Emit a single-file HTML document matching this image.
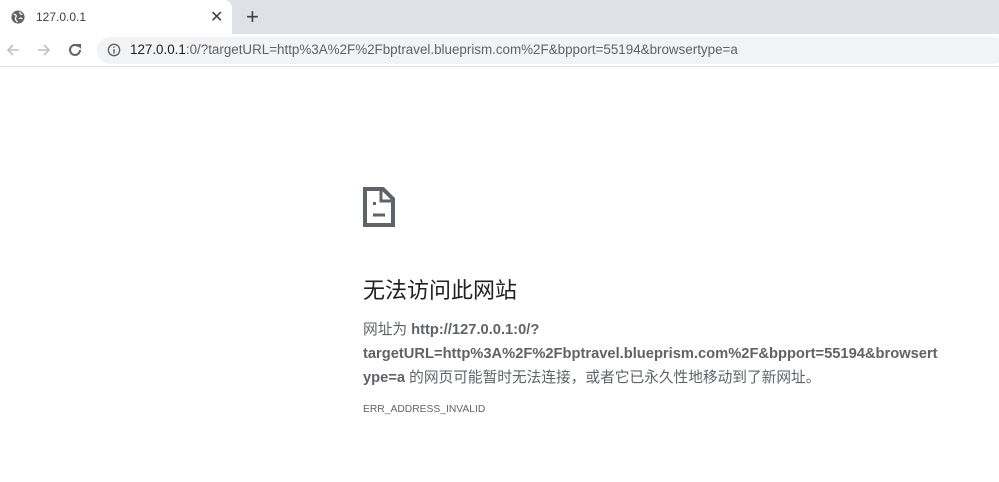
<!DOCTYPE html>
<html><head><meta charset="utf-8"><style>
*{margin:0;padding:0;box-sizing:border-box}
body{width:999px;height:482px;background:#fff;font-family:"Liberation Sans","Noto Sans CJK SC",sans-serif;position:relative;overflow:hidden}
.strip{position:absolute;left:0;top:0;width:999px;height:34px;background:#dee1e6}
.tab{position:absolute;left:0;top:0;width:232px;height:34px;background:#fff;border-radius:0 8px 0 0}
.tab .t{position:absolute;left:36px;top:10px;font-size:12px;color:#3c4043}
.tab .x{position:absolute;left:210px;top:7px;font-size:16px;color:#3c4043}
.plus{position:absolute;left:246px;top:4px;font-size:22px;color:#3c4043}
.bar{position:absolute;left:0;top:34px;width:999px;height:33px;background:#fff;border-bottom:1px solid #dadce0}
.omni{position:absolute;left:97px;top:3px;width:910px;height:27px;background:#f1f3f4;border-radius:14px}
.url{position:absolute;left:130px;top:42px;font-size:13.4px;color:#5f6368;white-space:nowrap}
.url b{font-weight:normal;color:#202124}
h1{position:absolute;left:363px;top:273px;font-size:22px;font-weight:normal;color:#202124;font-family:"Liberation Sans","Noto Sans CJK SC",sans-serif}
.p{position:absolute;left:363px;top:318px;font-size:14.7px;line-height:24px;color:#5f6368;white-space:nowrap}
.p b{color:#5f6368}
.err{position:absolute;left:363px;top:404px;font-size:10.3px;color:#5f6368}
</style></head><body>
<div class="strip"></div>
<div class="tab">
<svg style="position:absolute;left:11px;top:10px" width="14" height="14" viewBox="0 0 16 16"><circle cx="8" cy="8" r="7.5" fill="#5f6368"/><path d="M3 5c2 0 3 1 3 2s-1 1-1 3 2 2 2 4M10 2c0 2 1 3 3 3M9 10c1-1 3-1 4 0" stroke="#fff" stroke-width="1.5" fill="none"/></svg>
<div class="t">127.0.0.1</div><div class="x">✕</div></div>
<div class="plus">+</div>
<div class="bar"><div class="omni"></div>
<svg style="position:absolute;left:5px;top:8px" width="16" height="16" viewBox="0 0 16 16"><path d="M14 8H3M8 3L3 8l5 5" stroke="#bdc1c6" stroke-width="1.6" fill="none"/></svg>
<svg style="position:absolute;left:36px;top:8px" width="16" height="16" viewBox="0 0 16 16"><path d="M2 8h11M8 3l5 5-5 5" stroke="#bdc1c6" stroke-width="1.6" fill="none"/></svg>
<svg style="position:absolute;left:67px;top:8px" width="16" height="16" viewBox="0 0 16 16"><path d="M13 8a5 5 0 1 1-1.5-3.6" stroke="#5f6368" stroke-width="2" fill="none"/><path d="M9 2h5v5z" fill="#5f6368"/></svg>
<svg style="position:absolute;left:107px;top:9px" width="14" height="14" viewBox="0 0 16 16"><circle cx="8" cy="8" r="6.5" stroke="#5f6368" stroke-width="1.5" fill="none"/><path d="M8 7v5M8 4v1.5" stroke="#5f6368" stroke-width="1.6"/></svg>
</div>
<div class="url"><b>127.0.0.1</b>:0/?targetURL=http%3A%2F%2Fbptravel.blueprism.com%2F&amp;bpport=55194&amp;browsertype=a</div>
<svg style="position:absolute;left:363px;top:187px" width="32" height="40" viewBox="0 0 32 40"><path d="M2 2h18l10 10v26H2z" fill="none" stroke="#5f6368" stroke-width="4"/><path d="M18 2v12h12" fill="none" stroke="#5f6368" stroke-width="3"/><rect x="10" y="15" width="3" height="3" fill="#5f6368"/><path d="M10 28h12" stroke="#5f6368" stroke-width="3"/></svg>
<h1>无法访问此网站</h1>
<div class="p">网址为 <b>http://127.0.0.1:0/?</b><br><b>targetURL=http%3A%2F%2Fbptravel.blueprism.com%2F&amp;bpport=55194&amp;browsert</b><br><b>ype=a</b> 的网页可能暂时无法连接，或者它已永久性地移动到了新网址。</div>
<div class="err">ERR_ADDRESS_INVALID</div>
</body></html>
